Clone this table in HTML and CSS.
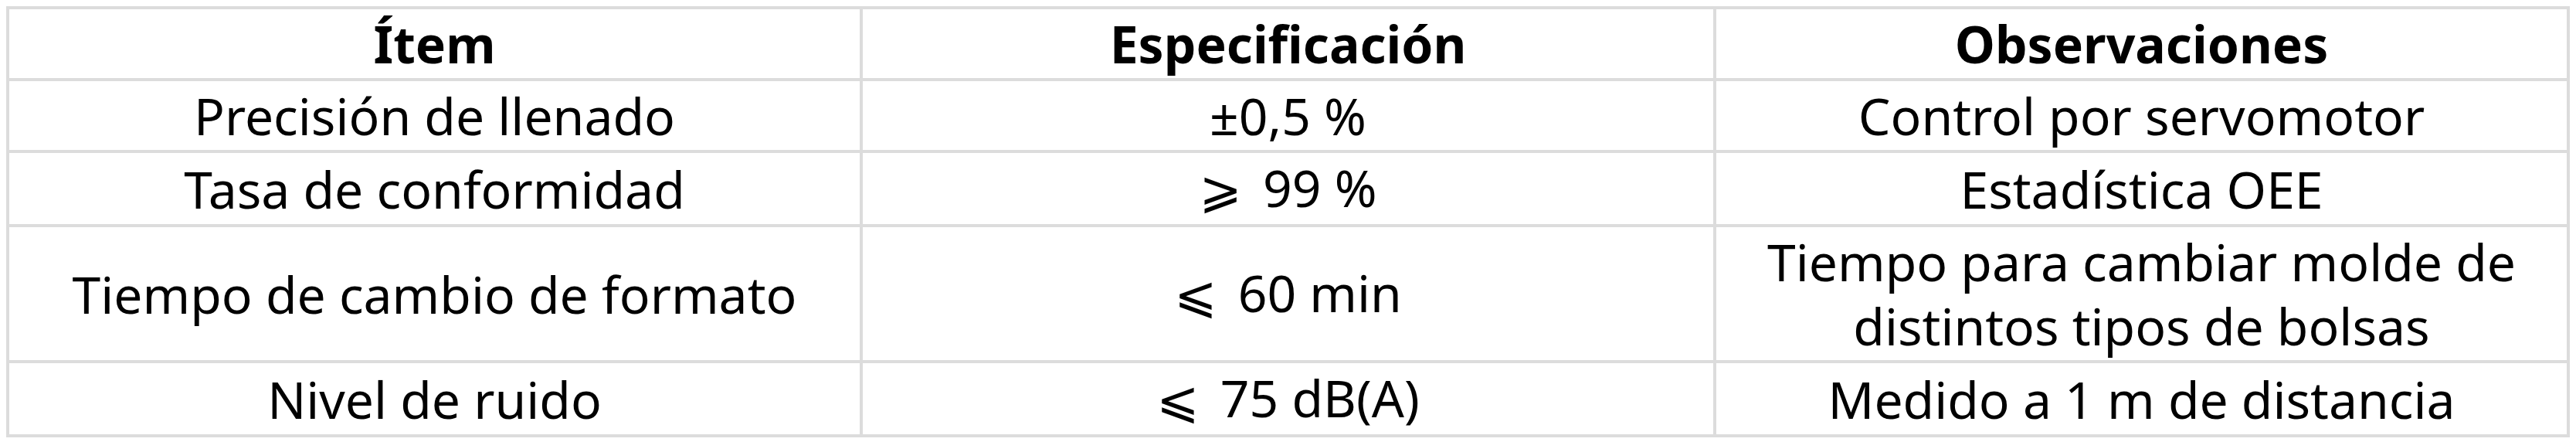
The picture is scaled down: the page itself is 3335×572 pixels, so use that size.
FILE: index.html
```html
<!DOCTYPE html>
<html lang="es">
<head>
<meta charset="utf-8">
<title>Especificaciones</title>
<link rel="stylesheet" href="styles.css">
</head>
<body>
<table class="spec-table">
  <thead>
    <tr>
      <th>Ítem</th>
      <th>Especificación</th>
      <th>Observaciones</th>
    </tr>
  </thead>
  <tbody>
    <tr>
      <td>Precisión de llenado</td>
      <td>±0,5 %</td>
      <td>Control por servomotor</td>
    </tr>
    <tr>
      <td>Tasa de conformidad</td>
      <td><span class="sym">⩾</span> 99 %</td>
      <td>Estadística OEE</td>
    </tr>
    <tr>
      <td>Tiempo de cambio de formato</td>
      <td><span class="sym">⩽</span> 60 min</td>
      <td>Tiempo para cambiar molde de<br>distintos tipos de bolsas</td>
    </tr>
    <tr>
      <td>Nivel de ruido</td>
      <td><span class="sym">⩽</span> 75 dB(A)</td>
      <td>Medido a 1 m de distancia</td>
    </tr>
  </tbody>
</table>
</body>
</html>
```
FILE: styles.css
```css
html, body {
  margin: 0;
  padding: 0;
  background: #ffffff;
}
body {
  padding: 8px;
  font-family: "Noto Sans", "Noto Sans CJK SC", sans-serif;
  color: #000000;
}
.spec-table {
  width: 100%;
  border-collapse: collapse;
  table-layout: fixed;
}
.spec-table th,
.spec-table td {
  border: 4px solid #dcdcdc;
  text-align: center;
  vertical-align: middle;
  font-size: 66px;
  line-height: 83px;
  padding: 3px 10px;
}
.spec-table th {
  font-weight: 700;
}
.spec-table td {
  font-weight: 400;
}
.sym {
  font-family: "DejaVu Sans", sans-serif;
  margin-right: 10px;
}
```
